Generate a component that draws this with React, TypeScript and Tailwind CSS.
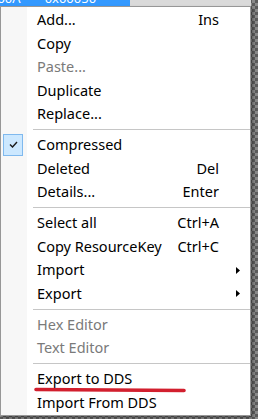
import React from "react"

type Item = {
  label: string
  shortcut?: string
  disabled?: boolean
  checked?: boolean
  submenu?: boolean
}

const groups: Item[][] = [
  [
    { label: "Add...", shortcut: "Ins" },
    { label: "Copy" },
    { label: "Paste...", disabled: true },
    { label: "Duplicate" },
    { label: "Replace..." },
  ],
  [
    { label: "Compressed", checked: true },
    { label: "Deleted", shortcut: "Del" },
    { label: "Details...", shortcut: "Enter" },
  ],
  [
    { label: "Select all", shortcut: "Ctrl+A" },
    { label: "Copy ResourceKey", shortcut: "Ctrl+C" },
    { label: "Import", submenu: true },
    { label: "Export", submenu: true },
  ],
  [
    { label: "Hex Editor", disabled: true },
    { label: "Text Editor", disabled: true },
  ],
  [{ label: "Export to DDS" }, { label: "Import From DDS" }],
]

function MenuRow({ item }: { item: Item }) {
  return (
    <div className="flex items-center h-[23.6px]">
      <div className="w-[36px] shrink-0 flex items-center pl-[2px]">
        {item.checked && (
          <div className="w-[20px] h-[22px] bg-[#cce8ff] border border-[#7fb9ee] flex items-center justify-center">
            <svg width="9" height="7" viewBox="0 0 9 7">
              <path d="M1 3.5 L3.5 6 L8 1" fill="none" stroke="#1a1a1a" strokeWidth="1.4" />
            </svg>
          </div>
        )}
      </div>
      <div className={"flex-1 whitespace-nowrap " + (item.disabled ? "text-[#7a7a7a]" : "text-black")}>
        {item.label}
      </div>
      {item.shortcut && <div className="whitespace-nowrap text-black">{item.shortcut}</div>}
      <div className="w-[31px] shrink-0 flex items-center pl-[17px]">
        {item.submenu && (
          <svg width="4" height="7" viewBox="0 0 4 7">
            <path d="M0 0 L4 3.5 L0 7 Z" fill="#000" />
          </svg>
        )}
      </div>
    </div>
  )
}

export default function App() {
  return (
    <div
      className="w-[258px] h-[419px] relative overflow-hidden bg-[repeating-conic-gradient(#5c5c5c_0_25%,#8a8a8a_0_50%)] bg-[length:6px_6px]"
      style={{ fontFamily: '"Noto Sans", "Open Sans", sans-serif' }}
    >
      {/* list row behind the menu */}
      <div className="flex h-[7px]">
        <div className="w-[130px] bg-[#3399ff] overflow-hidden text-white text-[13px] leading-[14px]">
          <div className="-mt-[9px] flex whitespace-nowrap">
            <span className="-ml-[10px]">000A</span>
            <span className="ml-[24px]">0x00050</span>
          </div>
        </div>
        <div className="w-[121px] bg-[#dadada]" />
      </div>

      {/* context menu */}
      <div className="absolute left-0 top-[6px] w-[251px] h-[410px] bg-white border border-[#979797] pt-px text-[14.5px] shadow-[2px_2px_3px_rgba(0,0,0,0.35)]">
        <div className="absolute left-0 top-0 bottom-0 w-[26px] bg-[#f7f7f7]" />
        <div className="relative">
          {groups.map((g, gi) => (
            <div key={gi}>
              {gi > 0 && (
                <div className="h-[7.2px] flex items-center pl-[32px]">
                  <div className="h-px flex-1 bg-[#c6c6c6]" />
                </div>
              )}
              {g.map((item) => (
                <MenuRow key={item.label} item={item} />
              ))}
            </div>
          ))}
        </div>
        <svg className="absolute left-[32px] top-[379px]" width="154" height="8" viewBox="0 0 154 8">
          <path d="M3 3.5 L151 4.5" stroke="#d21f2e" strokeWidth="3.6" strokeLinecap="round" />
        </svg>
      </div>
    </div>
  )
}
